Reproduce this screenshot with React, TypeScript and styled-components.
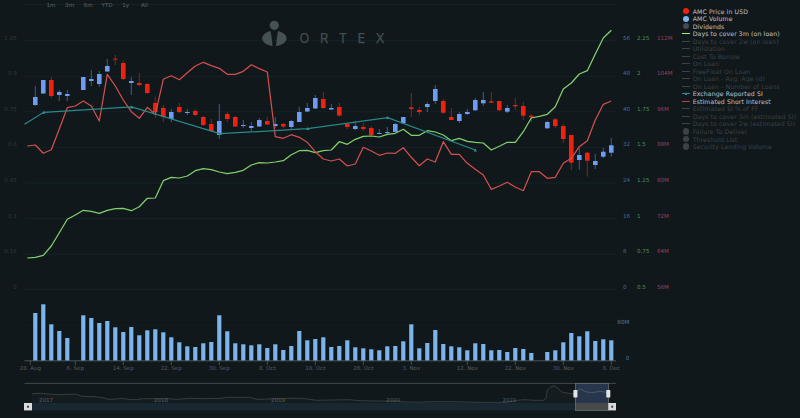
import React from "react";
import styled, { createGlobalStyle } from "styled-components";

const BG = "#10181b";
const GRID = "#16242a";
const FONT = '"DejaVu Sans", Verdana, sans-serif';

const Global = createGlobalStyle`
  html, body { margin: 0; padding: 0; background: ${BG}; }
  #root { width: 800px; height: 418px; overflow: hidden; }
`;

const Page = styled.div`
  display: flex;
  width: 800px;
  height: 418px;
  background: ${BG};
  font-family: ${FONT};
  overflow: hidden;
`;
const ChartColumn = styled.div`
  position: relative;
  display: flex;
  flex-direction: column;
  width: 678px;
  flex: none;
`;
const RangeBar = styled.div`
  position: absolute;
  top: 2px;
  left: 41.6px;
  display: flex;
`;
const RangeButton = styled.span`
  width: 18.7px;
  text-align: center;
  font-size: 5.6px;
  line-height: 7px;
  color: #5d6468;
`;
const Panel = styled.svg`
  display: block;
  width: 678px;
  flex: none;
  font-family: ${FONT};
`;
const AxisText = styled.text<{ $c: string; $end?: boolean }>`
  font-size: 5.6px;
  fill: ${(p) => p.$c};
  text-anchor: ${(p) => (p.$end ? "end" : "start")};
  dominant-baseline: central;
`;
const DateText = styled.text`
  font-size: 5.5px;
  fill: #565c60;
  text-anchor: middle;
  dominant-baseline: central;
`;
const YearText = styled.text`
  font-size: 5.5px;
  fill: #5a6063;
  text-anchor: middle;
  dominant-baseline: central;
`;
const LogoText = styled.text`
  font-family: Inter, "Liberation Sans", sans-serif;
  font-size: 12.8px;
  font-weight: 400;
  letter-spacing: 10.6px;
  fill: #434d50;
  stroke: #434d50;
  stroke-width: 0.25px;
`;
const Legend = styled.ul`
  list-style: none;
  margin: 0;
  padding: 7.5px 0 0 4px;
  display: flex;
  flex-direction: column;
`;
const LegendRow = styled.li<{ $on: boolean }>`
  display: flex;
  align-items: center;
  height: 7.53px;
  gap: 2.7px;
  font-size: 6.2px;
  letter-spacing: 0.1px;
  white-space: nowrap;
  color: ${(p) => (p.$on ? "#adb1b4" : "#3b4144")};
  -webkit-text-stroke: ${(p) => (p.$on ? "0.1px #adb1b4" : "0")};
`;
const Swatch = styled.span`
  position: relative;
  display: flex;
  align-items: center;
  justify-content: center;
  width: 8px;
  height: 7px;
  flex: none;
`;
const Dot = styled.span<{ $c: string }>`
  width: 6.2px;
  height: 6.2px;
  border-radius: 50%;
  background: ${(p) => p.$c};
`;
const Dash = styled.span<{ $c: string; $h: number }>`
  width: 8px;
  height: ${(p) => p.$h}px;
  background: ${(p) => p.$c};
`;
const Tri = styled.span`
  position: absolute;
  left: 2.5px;
  top: 2px;
  width: 0;
  height: 0;
  border-left: 1.5px solid transparent;
  border-right: 1.5px solid transparent;
  border-bottom: 3px solid #2a9c9c;
`;

type Item = { t: string; k: "dot" | "line" | "tri"; c: string; on?: boolean; h?: number };
const OFF = "#3b4144";
const items: Item[] = [
  { t: "AMC Price in USD", k: "dot", c: "#f0200f", on: true },
  { t: "AMC Volume", k: "dot", c: "#7cb5ec", on: true },
  { t: "Dividends", k: "dot", c: "#444a4d", on: true },
  { t: "Days to cover 3m (on loan)", k: "line", c: "#a4ef7c", on: true, h: 1 },
  { t: "Days to cover 2w (on loan)", k: "line", c: OFF, h: 1 },
  { t: "Utilization", k: "line", c: OFF, h: 1 },
  { t: "Cost To Borrow", k: "line", c: OFF, h: 1 },
  { t: "On Loan", k: "line", c: OFF, h: 1 },
  { t: "FreeFloat On Loan", k: "line", c: OFF, h: 1 },
  { t: "On Loan - Avg. Age (d)", k: "line", c: OFF, h: 1 },
  { t: "On Loan - Number of Loans", k: "line", c: OFF, h: 1 },
  { t: "Exchange Reported SI", k: "tri", c: "#2a8a8a", on: true, h: 1 },
  { t: "Estimated Short Interest", k: "line", c: "#b8403e", on: true, h: 1.5 },
  { t: "Estimated SI % of FF", k: "line", c: OFF, h: 1 },
  { t: "Days to cover 3m (estimated SI)", k: "line", c: OFF, h: 1 },
  { t: "Days to cover 2w (estimated SI)", k: "line", c: OFF, h: 1 },
  { t: "Failure To Deliver", k: "dot", c: "#3b4144" },
  { t: "Threshold List", k: "dot", c: "#3b4144" },
  { t: "Security Lending Volume", k: "dot", c: "#3b4144" },
];

// index, wick top, body top, body bottom, wick bottom, red?
type C = [number, number, number, number, number, 0 | 1];
const candles: C[] = [
  [0,86,97,105,106,0],[1,80,80,93.5,94,0],[2,77,80,96,98,1],[3,90,92,95,101,0],[4,90,94,96,101,0],
  [6,77,77,90,90,0],[7,70,79,81,86,0],[8,71,74,84,87,0],[9,59,66,71.5,72,0],[10,55,58.7,59.4,65,1],
  [11,60.5,63,79,80,1],[12,77,81,83,95,0],[13,73,83,85,86,1],[14,83,84,93,94,1],[15,97,103,112,118,1],
  [16,105,108,117,122,1],[17,109,112,119,122,0],[18,103,107,112,113,1],[19,109,112,113,115,0],[20,109,111,115,116,1],
  [21,116,117,125,126,1],[22,119,124,131,132,1],[23,104,121,135,139,0],[24,112,114,119,122,1],[25,116,117,126.5,127,1],
  [26,120,125,126,128,0],[27,122,126,128,131,0],[28,118,120,126.5,127,0],[29,117,121,124.5,125,1],[30,117,124,126,128,0],
  [31,123,124,126.5,128,1],[32,120,121,127,129,0],[33,107,112,122,122,0],[34,103,108,111.5,112,0],[35,95,98,108.5,109,0],
  [36,92,99,108,109,1],[37,104,108,109.5,110,0],[38,103,107,115.5,117,1],[39,123,124,127,129,1],[40,121,126,129,130,0],
  [41,123,127,129,131,1],[42,126,128,135,136,1],[43,129,133,134,134,0],[44,127,132,133,134,0],[45,123,124,132,132,0],
  [46,117,117,123.3,124,0],[47,93,107.3,109,117,1],[48,107,110,112,115,1],[49,102,104,107,112,0],[50,85,89,101,104,0],
  [51,99,101,112.7,114,1],[52,108,117,120,120,1],[53,112,114,121,123,0],[54,109,112,114,115,0],[55,98,100,110.3,111,0],
  [56,92,100,103.3,106,0],[57,92,101.3,102.7,103,1],[58,101,101,110.3,111,1],[59,105,108,111.7,113,0],[60,98,105,106.3,110,1],
  [61,102,106,115.7,120,1],[62,114,115.7,117.3,122,1],[64,120.7,122,128.3,129,0],[65,118,119.3,126,128,1],[66,124,126,139,143,1],
  [67,135,135,162.7,170,1],[68,148,155,160,169.5,0],[69,152,152.7,160.7,176.7,1],[70,154,161,165,169,0],[71,148,151.7,156.7,158,0],
  [72,138,145.3,152.7,156.7,0],
];
const cx = (i: number) => 35.3 + 8 * i;

const redY = [146,145,153.3,149.7,129,107.7,106,101,106,121,74.3,86,100,111.7,118.3,107.3,114.3,79.3,75.7,79.7,72.7,66,62.3,65.7,68.3,74.3,74.3,71.3,64.7,68.7,72,136.7,138.3,134.7,137.3,142.3,151.7,159,161,159,166,164,147.3,151,155.3,153,153.3,147.7,157.3,165.7,159,162,141.7,154.3,154.3,163.3,169.3,175,189.3,186,182.3,187,190.7,171.7,171.7,178.3,177.3,163.3,158.3,146.7,140.7,120,104.3,101];
const greenY = [258,257.3,255.3,246,232.7,219.3,215,210.3,211.3,213.3,210.3,208.7,208.3,210.7,206.7,198.3,198,180.7,177.3,178,176,170.7,168.7,169.7,172,173.7,172.3,170.3,165,162.7,163,162,160.7,154.7,150.7,150.3,152.7,150.7,150,141.7,144.3,139.3,136.3,136,137,134.3,133.3,129.3,135.3,135.3,130.7,132,135,140.7,138.3,141.3,142.3,143,150,146.3,142.3,142.3,131.7,118,116.3,114.3,106.7,89,83,74,70.7,54,38,30.3];
const toPts = (a: number[]) => a.map((y, k) => `${(27.3 + 8 * k).toFixed(1)},${y}`).join(" ");

const teal: [number, number][] = [[24.5,124.3],[43.7,112.3],[131.7,107],[219.7,133.7],[307.7,128.7],[387.7,117.7],[475.3,150]];

const volTop: (number | null)[] = [313,304.3,324.3,331,338,null,315.3,318,323,321,327.3,332,327,335.3,330.3,329.3,332.3,337.3,342.3,346.3,347,343.3,342,315.3,331.3,343.3,344.3,345.3,344.3,348,344.3,350,346,331,340.3,339,337.3,347,346,340.3,347.3,348.3,349.3,350.3,346.3,346,341.3,324.3,348.3,343,330,344,346.3,347.3,350.3,343.3,344,350.3,350,352,348,349,353,null,352,350.3,342.3,333,336.3,331.3,341,339.3,340.3];

const grids = [4.5, 40.7, 76.3, 111.8, 147.3, 183, 218.6, 254.2, 289.5];
const left = ["1.05","0.9","0.75","0.6","0.45","0.3","0.15","0"];
const blue = ["56","48","40","32","24","16","8","0"];
const green = ["2.25","2","1.75","1.5","1.25","1","0.75","0.5"];
const pink = ["112M","104M","96M","88M","80M","72M","64M","56M"];

const dates: [number, string][] = [[30.3,"28. Aug"],[75.3,"6. Sep"],[123.3,"14. Sep"],[171.3,"22. Sep"],[219.3,"30. Sep"],[267.3,"8. Oct"],[315.3,"18. Oct"],[363.3,"26. Oct"],[411.3,"3. Nov"],[467.3,"12. Nov"],[515.3,"22. Nov"],[563.3,"30. Nov"],[611.3,"8. Dec"]];
const years: [number, string][] = [[46,"2017"],[161,"2018"],[278,"2019"],[393,"2020"],[509.5,"2021"]];

const z5: [number, number][] = [[95,311],[120,310],[145,312],[170,314],[200,313],[230,313],[245,319],[285,320],[310,323],[325,328],[350,327],[365,325],[385,328],[410,329],[430,326],[470,326],[500,326],[530,328],[570,325],[610,326],[660,325],[685,322],[750,322],[770,328],[810,327],[860,325],[905,325],[950,331],[1000,330],[1045,329],[1080,332],[1130,333],[1200,333]];
const z6: [number, number][] = [[0,335],[50,337],[100,335],[170,335],[240,337],[320,337],[350,331],[375,329],[400,331],[430,331],[438,325],[442,300],[450,292],[462,287],[475,295],[485,306],[505,310],[520,312],[530,305],[540,296],[555,305],[575,308],[600,304],[625,308]];
const navPts: string = [
  ...z5.map(([x, y]) => [x / 3, 290 + y / 3] as [number, number]),
  ...z6.map(([x, y]) => [400 + x / 3, 290 + y / 3] as [number, number]),
].map(([x, y]) => `${x.toFixed(1)},${y.toFixed(1)}`).join(" ");

export default function App() {
  return (
    <Page>
      <Global />
      <ChartColumn>
        <RangeBar>
          {["1m", "3m", "6m", "YTD", "1y", "All"].map((t) => (
            <RangeButton key={t}>{t}</RangeButton>
          ))}
        </RangeBar>
        <Panel viewBox="0 0 678 296" height={296}>
          {grids.map((y) => (
            <line key={y} x1={24.5} x2={616} y1={y} y2={y} stroke={GRID} strokeWidth={0.9} />
          ))}
          <g fill="#465154">
            <circle cx={274.3} cy={25.3} r={4.6} />
            <path d="M270.5 31 C265.5 32.3 262.2 35 262.2 38.4 C262.2 42 267 45.3 272.6 45.9 L271.6 37 Z" />
            <path d="M278 31 C283 32.3 286.6 35 286.6 38.4 C286.6 42 281.8 45.3 276 45.9 L277 37 Z" />
          </g>
          <LogoText x={299.5} y={43.4}>ORTEX</LogoText>
          {left.map((t, k) => (
            <AxisText key={t} $c="#30373a" $end x={16.8} y={grids[k + 1] - 3}>{t}</AxisText>
          ))}
          {blue.map((t, k) => (
            <AxisText key={t} $c="#47689c" x={623} y={grids[k + 1] - 3}>{t}</AxisText>
          ))}
          {green.map((t, k) => (
            <AxisText key={t} $c="#4f8f4d" x={637} y={grids[k + 1] - 3}>{t}</AxisText>
          ))}
          {pink.map((t, k) => (
            <AxisText key={t} $c="#96405f" x={657} y={grids[k + 1] - 3}>{t}</AxisText>
          ))}
          {candles.map(([i, wt, bt, bb, wb, red]) => (
            <g key={i}>
              <line x1={cx(i)} x2={cx(i)} y1={wt} y2={wb} stroke={red ? "#8a2a1e" : "#44639b"} strokeWidth={0.9} />
              <rect x={cx(i) - 2.3} y={bt} width={4.6} height={Math.max(bb - bt, 0.9)} fill={red ? "#f4200e" : "#6d9cf2"} />
            </g>
          ))}
          <polyline points={toPts(greenY)} fill="none" stroke="#80d16c" strokeWidth={1.25} strokeLinejoin="round" />
          <polyline points={toPts(redY)} fill="none" stroke="#d24f4d" strokeWidth={1.25} strokeLinejoin="round" />
          <polyline points={teal.map((p) => p.join(",")).join(" ")} fill="none" stroke="#2a8888" strokeWidth={1.25} />
          {teal.slice(1).map(([x, y]) => (
            <path key={x} d={`M${x} ${y - 1.6} L${x + 1.7} ${y + 1.4} L${x - 1.7} ${y + 1.4} Z`} fill="#2a9494" />
          ))}
        </Panel>
        <Panel viewBox="0 296 678 78" height={78}>
          <line x1={24.5} x2={616} y1={325.3} y2={325.3} stroke="#142126" strokeWidth={0.6} />
          {volTop.map((y, i) =>
            y === null ? null : (
              <rect key={i} x={cx(i) - 2.1} y={y} width={4.2} height={360.7 - y} fill="#7cb5ec" />
            )
          )}
          <line x1={24.5} x2={616} y1={360.8} y2={360.8} stroke="#5b6367" strokeWidth={0.8} />
          {dates.map(([x, t]) => (
            <g key={t}>
              <line x1={x} x2={x} y1={361} y2={365} stroke="#5b6367" strokeWidth={0.7} />
              <DateText x={x} y={367.8}>{t}</DateText>
            </g>
          ))}
          <AxisText $c="#4a78a8" $end x={629.3} y={322}>80M</AxisText>
          <AxisText $c="#4a78a8" $end x={629.3} y={357.7}>0</AxisText>
        </Panel>
        <Panel viewBox="0 374 678 44" height={44}>
          <polygon points={`31.7,403 ${navPts} 608.3,403`} fill="#151c1f" />
          <polyline points={navPts} fill="none" stroke="#454c4f" strokeWidth={0.7} />
          {years.map(([x, t]) => (
            <YearText key={t} x={x} y={399.5}>{t}</YearText>
          ))}
          <line x1={24.5} x2={616} y1={383.4} y2={383.4} stroke="#555b5e" strokeWidth={0.7} />
          <rect x={24} y={403} width={592} height={7.4} fill="#182731" />
          <rect x={575.4} y={383.4} width={33} height={19.6} fill="#2b3b56" fillOpacity={0.85} />
          <clipPath id="sel"><rect x={575.4} y={383} width={33} height={20} /></clipPath>
          <polyline points={navPts} fill="none" stroke="#5c6a78" strokeWidth={0.6} clipPath="url(#sel)" />
          <rect x={575.4} y={403} width={33} height={7.4} fill="#47494b" />
          <rect x={575.4} y={383.4} width={33} height={27} fill="none" stroke="#6a6e70" strokeWidth={0.8} />
          <rect x={24} y={403} width={8} height={7.4} fill="#d9dbdc" />
          <rect x={27} y={405.7} width={2} height={2} fill="#444" />
          <rect x={608.3} y={403} width={7.7} height={7.4} fill="#d9dbdc" />
          <rect x={611.2} y={405.7} width={2} height={2} fill="#444" />
          <rect x={573.4} y={390} width={4} height={7.4} rx={0.6} fill="#e3e4e5" />
          <rect x={606.3} y={390} width={4} height={7.4} rx={0.6} fill="#e3e4e5" />
        </Panel>
      </ChartColumn>
      <Legend>
        {items.map((it) => (
          <LegendRow key={it.t} $on={!!it.on}>
            <Swatch>
              {it.k === "dot" ? <Dot $c={it.c} /> : <Dash $c={it.c} $h={it.h ?? 1} />}
              {it.k === "tri" ? <Tri /> : null}
            </Swatch>
            {it.t}
          </LegendRow>
        ))}
      </Legend>
    </Page>
  );
}
